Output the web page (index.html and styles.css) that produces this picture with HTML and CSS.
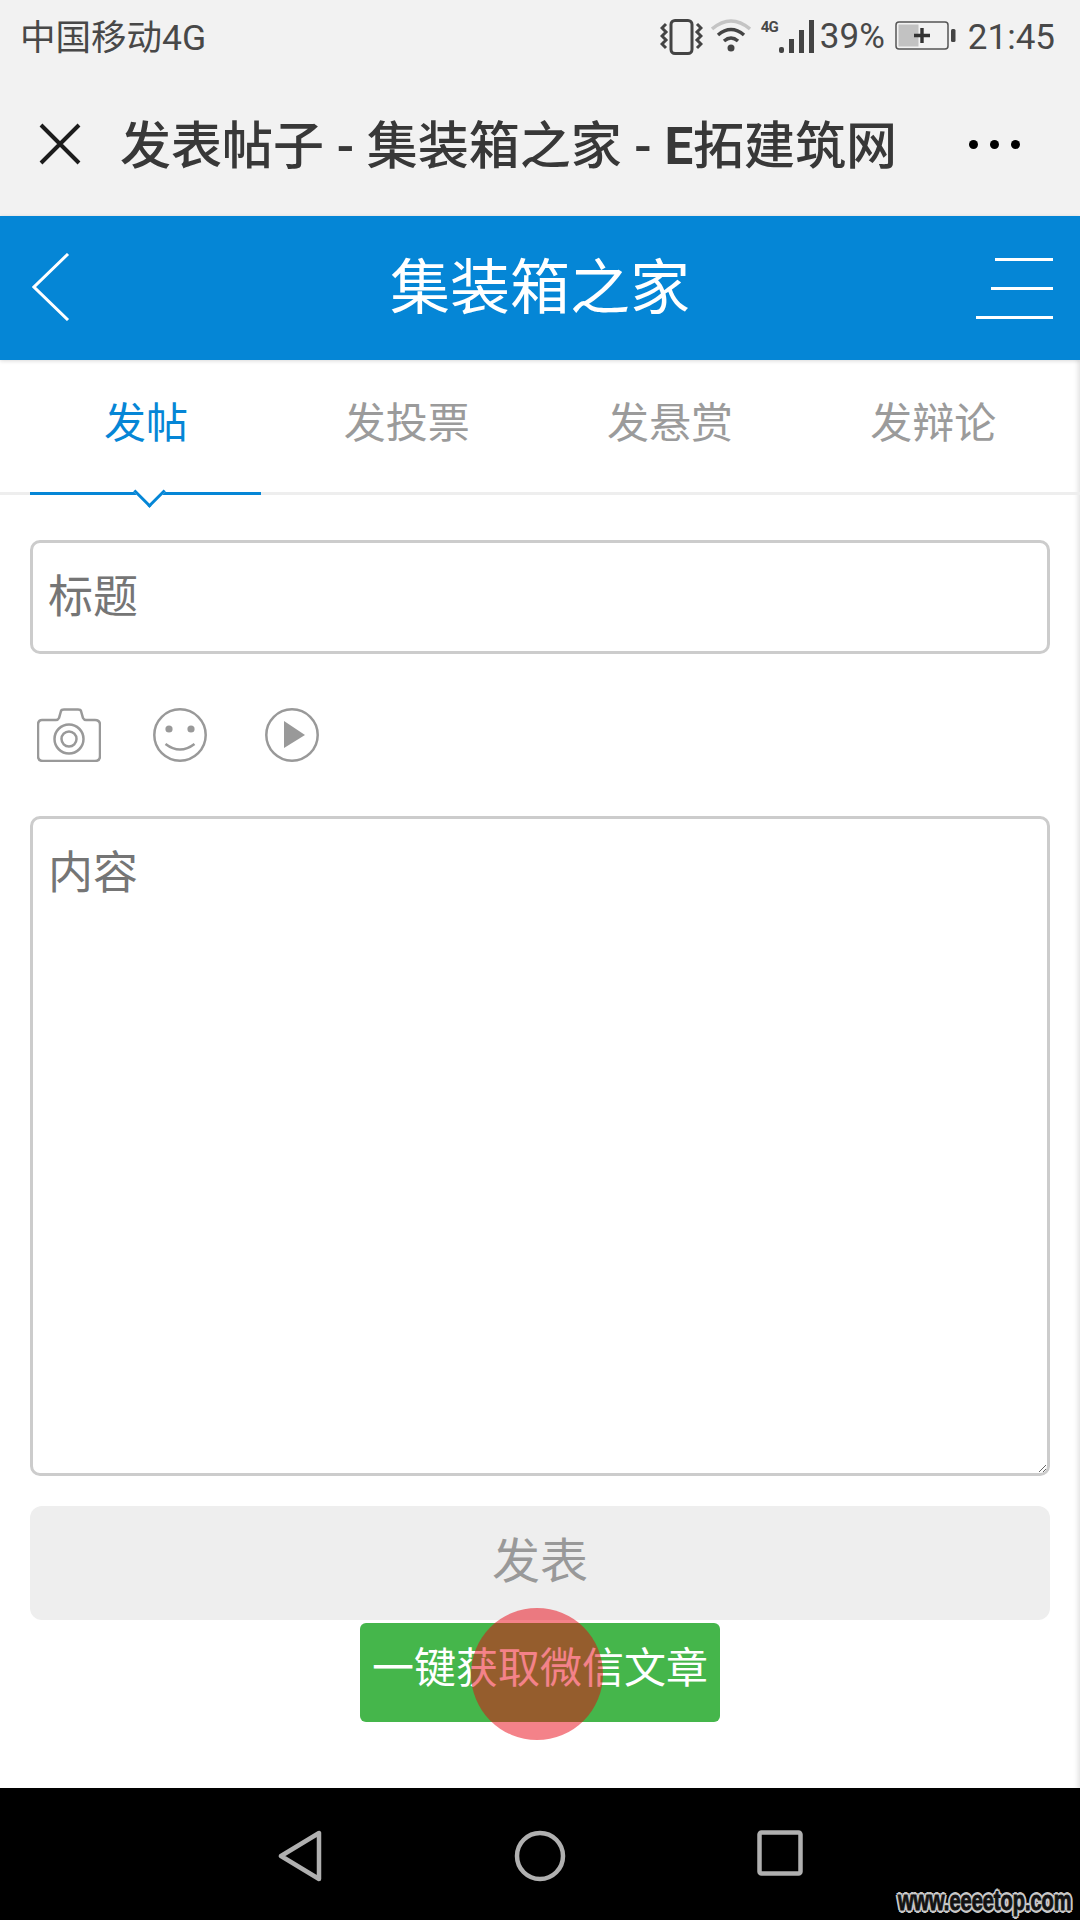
FILE: index.html
```html
<!DOCTYPE html>
<html lang="zh-CN">
<head>
  <meta charset="UTF-8">
  <meta name="viewport" content="width=device-width, initial-scale=1.0">
  <title>发表帖子 - 集装箱之家 - E拓建筑网</title>
  <link rel="stylesheet" href="styles.css">
</head>
<body>
  <!-- Phone status bar -->
  <div class="status-bar">
    <span class="carrier">中国移动4G</span>
    <div class="status-right">
      <svg class="st-vibrate" width="43" height="36" viewBox="0 0 43 36">
        <rect x="11" y="1.500" width="21" height="33" rx="4" fill="none" stroke="#444" stroke-width="3"/>
        <path d="M6 5 L2 9 L6 13 L2 17 L6 21 L2 25 L6 29 M37 5 L41 9 L37 13 L41 17 L37 21 L41 25 L37 29" fill="none" stroke="#444" stroke-width="3"/>
      </svg>
      <svg class="st-wifi" width="40" height="33" viewBox="0 0 40 33">
        <path d="M1 10 Q20 -6 39 10" fill="none" stroke="#c4c4c4" stroke-width="3.500"/>
        <path d="M7 16 Q20 5 33 16" fill="none" stroke="#444" stroke-width="3.500"/>
        <path d="M13 22 Q20 16 27 22" fill="none" stroke="#444" stroke-width="3.500"/>
        <circle cx="20" cy="29" r="3.500" fill="#444"/>
      </svg>
      <span class="st-net">4G</span>
      <div class="st-signal">
        <i class="bar-1"></i><i class="bar-2"></i><i class="bar-3"></i><i class="bar-4"></i>
      </div>
      <span class="st-percent">39%</span>
      <svg class="st-battery" width="61" height="30" viewBox="0 0 61 30">
        <rect x="1" y="1" width="52" height="27" rx="3" fill="none" stroke="#555" stroke-width="1.500"/>
        <rect x="3.500" y="3.500" width="20" height="22" fill="#c2c2c2"/>
        <path d="M19 14.500 H35 M27 7 V22" stroke="#333" stroke-width="3.400"/>
        <rect x="56" y="8" width="4.500" height="13" rx="1.500" fill="#444"/>
      </svg>
      <span class="st-time">21:45</span>
    </div>
  </div>

  <!-- WeChat browser title -->
  <div class="title-bar">
    <svg class="close-icon" width="42" height="42" viewBox="0 0 42 42">
      <path d="M2 2 L40 40 M40 2 L2 40" stroke="#1c1c1c" stroke-width="4"/>
    </svg>
    <h1 class="page-title">发表帖子 - 集装箱之家 - <b>E</b>拓建筑网</h1>
    <div class="more-dots"><i></i><i></i><i></i></div>
  </div>

  <!-- Forum header -->
  <header class="forum-header">
    <svg class="back-icon" width="38" height="68" viewBox="0 0 38 68">
      <path d="M36 1 L2 34 L36 67" fill="none" stroke="#fff" stroke-width="3"/>
    </svg>
    <h2 class="forum-name">集装箱之家</h2>
    <div class="menu-icon">
      <i class="line-short"></i>
      <i class="line-mid"></i>
      <i class="line-long"></i>
    </div>
  </header>

  <main class="content">
    <!-- Post type tabs -->
    <nav class="tabs">
      <a class="tab active">发帖</a>
      <a class="tab">发投票</a>
      <a class="tab">发悬赏</a>
      <a class="tab">发辩论</a>
    </nav>

    <form class="post-form">
      <input class="title-input" type="text" placeholder="标题">

      <div class="tools">
        <svg width="64" height="54" viewBox="0 0 64 54">
          <path d="M5 12 H19 Q21 12 22 10 L24 3 Q24.500 1.500 27 1.500 H41 Q43.500 1.500 44 3 L46 10 Q47 12 49 12 H58 Q63 12 63 17 V48 Q63 53 58 53 H6 Q1 53 1 48 V17 Q1 12 5 12 Z" fill="none" stroke="#999" stroke-width="2.500"/>
          <circle cx="32" cy="31" r="14.500" fill="none" stroke="#999" stroke-width="2.500"/>
          <circle cx="32" cy="31" r="7.500" fill="none" stroke="#999" stroke-width="2.500"/>
        </svg>
        <svg width="54" height="54" viewBox="0 0 54 54">
          <circle cx="27" cy="27" r="25.700" fill="none" stroke="#999" stroke-width="2.500"/>
          <circle cx="16" cy="21" r="3.600" fill="#999"/>
          <circle cx="38" cy="21" r="3.600" fill="#999"/>
          <path d="M12.500 36 Q27 47 41.500 36" fill="none" stroke="#999" stroke-width="2.500"/>
        </svg>
        <svg width="54" height="54" viewBox="0 0 54 54">
          <circle cx="27" cy="27" r="25.700" fill="none" stroke="#999" stroke-width="2.500"/>
          <path d="M19 13 L40 27 L19 40 Z" fill="#999"/>
        </svg>
      </div>

      <textarea class="body-input" placeholder="内容"></textarea>

      <button class="submit-button" type="button">发表</button>
      <button class="wechat-button" type="button">一键获取微信文章</button>
    </form>

    <!-- Touch indicator from the screen recording -->
    <div class="touch-dot"></div>
  </main>

  <!-- Android navigation -->
  <div class="nav-bar">
    <svg width="44" height="52" viewBox="0 0 44 52">
      <path d="M41 3 V49 L3 26 Z" fill="none" stroke="#b0b0b0" stroke-width="4.500" stroke-linejoin="round"/>
    </svg>
    <svg width="52" height="52" viewBox="0 0 52 52">
      <circle cx="26" cy="26" r="23" fill="none" stroke="#b0b0b0" stroke-width="4.500"/>
    </svg>
    <svg width="46" height="46" viewBox="0 0 46 46">
      <rect x="2.500" y="2.500" width="41" height="41" rx="2" fill="none" stroke="#b0b0b0" stroke-width="4.500"/>
    </svg>
    <span class="watermark">www.eeeetop.com</span>
  </div>
</body>
</html>
```
FILE: styles.css
```css
/* Global Styles */
* {
  box-sizing: border-box;
}

body {
  margin: 0;
  width: 1080px;
  height: 1920px;
  overflow: hidden;
  display: flex;
  flex-direction: column;
  background: #fff;
  font-family: Roboto, "Noto Sans CJK SC", sans-serif;
}

/* Status Bar */
.status-bar {
  height: 72px;
  padding: 18px 25px 0 20px;
  display: flex;
  justify-content: space-between;
  align-items: flex-start;
  background: #f2f2f2;
  color: #484848;
}

.carrier {
  font-size: 35.500px;
  line-height: 40px;
}

.status-right {
  display: flex;
  align-items: flex-start;
}

.st-vibrate {
  margin-top: 1px;
}

.st-wifi {
  margin: 1px 0 0 8px;
}

.st-net {
  width: 18px;
  margin-left: 10px;
  font-size: 15px;
  font-weight: 700;
  line-height: 18px;
  letter-spacing: -1px;
}

.st-signal {
  width: 35px;
  height: 33px;
  margin-top: 2px;
  display: flex;
  align-items: flex-end;
  justify-content: space-between;
}

.st-signal i {
  width: 5px;
  background: #444;
  display: block;
}

.bar-1 { height: 6px; border-radius: 2px; }
.bar-2 { height: 14px; }
.bar-3 { height: 23px; }
.bar-4 { height: 33px; }

.st-percent {
  margin-left: 6px;
  font-size: 35px;
  line-height: 38px;
}

.st-battery {
  margin: 3px 0 0 10px;
}

.st-time {
  margin-left: 12px;
  font-size: 35px;
  line-height: 40px;
}

/* Title Bar */
.title-bar {
  height: 144px;
  padding: 0 60px 0 39px;
  display: flex;
  align-items: center;
  background: #f2f2f2;
}

.close-icon {
  flex: none;
}

.page-title {
  margin: -4px 0 0 39px;
  flex: 1;
  font-size: 51px;
  font-weight: 500;
  color: #383838;
  white-space: nowrap;
}

.page-title b {
  font-weight: 700;
}

.more-dots {
  display: flex;
  gap: 12px;
}

.more-dots i {
  width: 9px;
  height: 9px;
  border-radius: 50%;
  background: #000;
  display: block;
}

/* Forum Header */
.forum-header {
  position: relative;
  z-index: 1;
  height: 144px;
  padding: 0 27px 0 32px;
  display: grid;
  grid-template-columns: 1fr auto 1fr;
  align-items: center;
  background: #0586d6;
  box-shadow: 0 1px 4px rgba(0, 0, 0, 0.15);
}

.back-icon {
  margin-top: -3px;
}

.forum-name {
  margin: -11px 5px 0 0;
  font-size: 60px;
  font-weight: 400;
  color: #fff;
}

.menu-icon {
  justify-self: end;
  width: 77px;
  display: flex;
  flex-direction: column;
  align-items: flex-end;
  gap: 26px;
}

.menu-icon i {
  height: 3px;
  background: #fff;
  display: block;
}

.line-short { width: 58px; }
.line-mid { width: 62px; }
.line-long { width: 77px; }

/* Content Area */
.content {
  position: relative;
  flex: 1;
  box-shadow: inset -6px 0 5px -4px rgba(0, 0, 0, 0.12);
}

.tabs {
  height: 135px;
  padding: 0 15px 0 12px;
  display: grid;
  grid-template-columns: repeat(4, 1fr);
  border-bottom: 3px solid #eee;
}

.tab {
  position: relative;
  padding-top: 34px;
  font-size: 42px;
  line-height: 60px;
  text-align: center;
  color: #9b9b9b;
}

.tab.active {
  padding-left: 5px;
  color: #0586d6;
}

.tab.active::before {
  content: "";
  position: absolute;
  left: 18px;
  width: 231px;
  bottom: -3px;
  height: 3px;
  background: #0586d6;
}

.tab.active::after {
  content: "";
  position: absolute;
  left: 126px;
  bottom: -11px;
  width: 20px;
  height: 20px;
  background: #fff;
  border-right: 3px solid #0586d6;
  border-bottom: 3px solid #0586d6;
  transform: rotate(45deg);
}

/* Form */
.post-form {
  padding: 45px 30px 0;
  display: flex;
  flex-direction: column;
}

.title-input,
.body-input {
  width: 100%;
  border: 3px solid #ccc;
  border-radius: 10px;
  background: #fff;
  font-family: Roboto, "Noto Sans CJK SC", sans-serif;
  font-size: 45px;
  outline: none;
  display: block;
}

.title-input::placeholder,
.body-input::placeholder {
  color: #757575;
  opacity: 1;
}

.title-input {
  height: 114px;
  padding: 0 15px;
}

.tools {
  height: 162px;
  padding: 54px 0 0 7px;
  display: flex;
  align-items: flex-start;
  gap: 53px;
}

.tools svg:nth-child(2) {
  margin-left: -1px;
}

.tools svg:nth-child(3) {
  margin-left: 5px;
}

.body-input {
  height: 660px;
  padding: 25px 15px 15px;
  line-height: 60px;
}

.submit-button {
  height: 114px;
  margin-top: 30px;
  padding: 0 0 12px;
  border: none;
  border-radius: 12px;
  background: #eee;
  font-family: Roboto, "Noto Sans CJK SC", sans-serif;
  font-size: 48px;
  color: #999;
}

.wechat-button {
  align-self: center;
  width: 360px;
  height: 99px;
  margin-top: 3px;
  padding: 0 0 17px;
  border: none;
  border-radius: 6px;
  background: #45b64b;
  font-family: Roboto, "Noto Sans CJK SC", sans-serif;
  font-size: 42px;
  color: #fff;
  white-space: nowrap;
}

.touch-dot {
  position: absolute;
  left: 471px;
  top: 1248px;
  width: 132px;
  height: 132px;
  border-radius: 50%;
  background: rgba(232, 0, 14, 0.49);
}

/* Navigation Bar */
.nav-bar {
  position: relative;
  height: 132px;
  flex: none;
  padding-top: 42px;
  display: grid;
  grid-template-columns: repeat(3, 240px);
  justify-content: center;
  justify-items: center;
  align-items: start;
  background: #000;
}

.watermark {
  position: absolute;
  right: 8px;
  bottom: 4px;
  font-family: "Liberation Sans", sans-serif;
  font-size: 27px;
  font-weight: 700;
  line-height: 30px;
  color: #111;
  transform: scaleX(0.74);
  transform-origin: right center;
  -webkit-text-stroke: 1px #111;
  text-shadow: -2px -2px 0 #c8c8c8, 2px -2px 0 #c8c8c8, -2px 2px 0 #c8c8c8, 2px 2px 0 #c8c8c8, 0 -3px 0 #c8c8c8, 0 3px 0 #c8c8c8, -3px 0 0 #c8c8c8, 3px 0 0 #c8c8c8;
}
```
